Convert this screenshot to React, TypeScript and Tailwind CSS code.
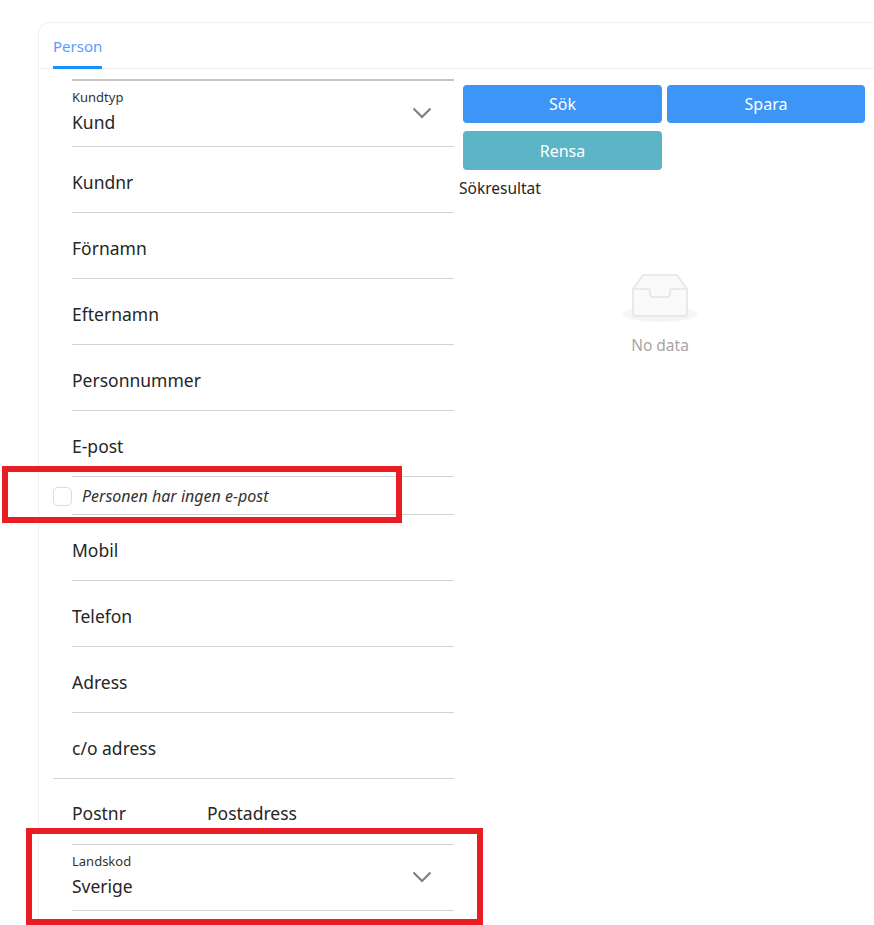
import React from 'react';

const font = "font-['Noto_Sans',sans-serif]";

const Field = ({ label, wide }: { label: string; wide?: boolean }) => (
  <div className={`h-[66px] flex items-center pt-[6px] border-b border-[#d2d2d2] ${wide ? '' : 'ml-[19px]'}`}>
    <span className={`text-[17.5px] text-[#262626] ${wide ? 'ml-[19px]' : ''}`}>{label}</span>
  </div>
);

const SelectField = ({ label, value }: { label: string; value: string }) => (
  <div className="ml-[19px] h-[66px] relative flex flex-col border-b border-[#d2d2d2]">
    <span className="text-[13px] leading-[18px] text-[#333] mt-[7px]">{label}</span>
    <span className="text-[17.5px] leading-[26px] text-[#262626] mt-[3px]">{value}</span>
    <svg className="absolute right-[22px] top-[25px]" width="20" height="14" viewBox="0 0 20 14" fill="none">
      <path d="M1.5 2.5 L10 11 L18.5 2.5" stroke="#808080" strokeWidth="2.2" />
    </svg>
  </div>
);

const EmptyIcon = () => (
  <svg width="76" height="50" viewBox="0 0 76 50" fill="none">
    <ellipse cx="38" cy="41" rx="37.5" ry="8" fill="#f5f5f5" />
    <path d="M11 16 L21 2 H55 L65 16 V40 a3 3 0 0 1 -3 3 H14 a3 3 0 0 1 -3 -3 Z" fill="#fafafa" stroke="#e4e4e4" strokeWidth="1.5" />
    <path d="M11 16 H26 a2 2 0 0 1 2 2 v3 a3 3 0 0 0 3 3 H45 a3 3 0 0 0 3 -3 v-3 a2 2 0 0 1 2 -2 H65" fill="none" stroke="#e4e4e4" strokeWidth="1.5" />
  </svg>
);

const App = () => {
  return (
    <div className={`relative w-[874px] h-[925px] overflow-hidden bg-white pt-[22px] pl-[38px] ${font}`}>
      <div className="h-[903px] rounded-tl-xl border-l border-t border-[#f0f0f0] flex flex-col">
        <div className="h-[46px] shrink-0 border-b border-[#f0f0f0] pl-[14px] flex">
          <div className="h-[46px] border-b-[3px] border-[#1890ff] pt-[13px] text-[15px] leading-[20px] text-[#5a9bff]">Person</div>
        </div>

        <div className="flex pl-[14px] pt-[10px]">
          <div className="w-[401px] shrink-0">
            <div className="ml-[19px] h-[2px] bg-[#c4c4c4]" />
            <SelectField label="Kundtyp" value="Kund" />
            <Field label="Kundnr" />
            <Field label="Förnamn" />
            <Field label="Efternamn" />
            <Field label="Personnummer" />
            <Field label="E-post" />
            <div className="h-[38px] flex items-center pt-[1px] relative border-b border-[#d2d2d2] ml-[19px]">
              <span className="absolute left-[-19px] top-[10px] w-[19px] h-[19px] rounded-[5px] border border-[#dcdcdc] bg-white" />
              <span className="ml-[10px] text-[16px] italic text-[#333]">Personen har ingen e-post</span>
            </div>
            <Field label="Mobil" />
            <Field label="Telefon" />
            <Field label="Adress" />
            <Field label="c/o adress" wide />
            <div className="ml-[19px] h-[66px] flex items-center pt-[4px] border-b border-[#d2d2d2] text-[17.5px] text-[#262626]">
              <span className="w-[135px]">Postnr</span>
              <span>Postadress</span>
            </div>
            <SelectField label="Landskod" value="Sverige" />
          </div>

          <div className="flex-1 pl-[5px] pt-[6px]">
            <div className="pl-[4px] grid grid-cols-[199px_198px] gap-x-[5px] gap-y-[8px]">
              <button className="h-[38px] rounded-[4px] bg-[#3d95f7] text-white text-[16px]">Sök</button>
              <button className="h-[38px] rounded-[4px] bg-[#3d95f7] text-white text-[16px]">Spara</button>
              <button className="h-[39px] rounded-[4px] bg-[#5bb5c6] text-white text-[16px]">Rensa</button>
            </div>
            <div className="mt-[7px] text-[15.5px] leading-[22px] text-[#262626]">Sökresultat</div>
            <div className="mt-[74px] w-[402px] flex flex-col items-center">
              <EmptyIcon />
              <span className="mt-[11px] text-[15.5px] leading-[22px] text-[#a6a6a6]">No data</span>
            </div>
          </div>
        </div>
      </div>

      {/* red annotation boxes drawn over the form */}
      <div className="absolute left-[2px] top-[466px] w-[400px] h-[57px] border-[6px] border-[#ea1c24]" />
      <div className="absolute left-[26px] top-[828px] w-[457px] h-[97px] border-[6px] border-[#ea1c24]" />
    </div>
  );
};

export default App;
